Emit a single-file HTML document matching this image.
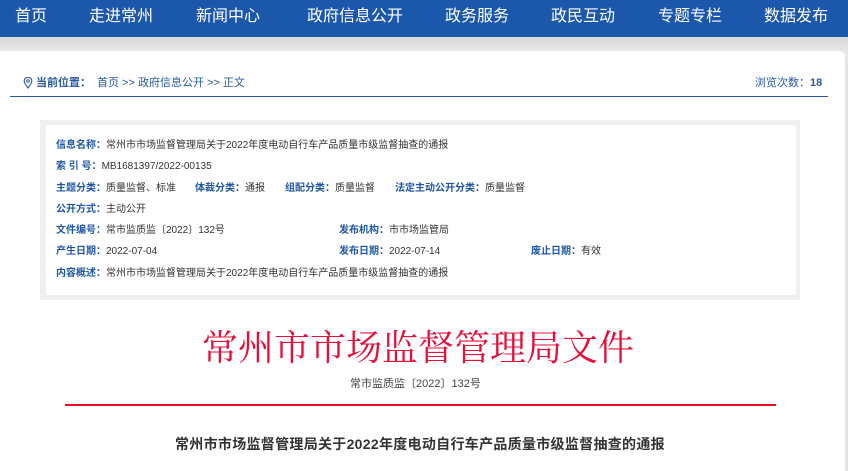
<!DOCTYPE html>
<html><head><meta charset="utf-8"><style>
*{margin:0;padding:0;box-sizing:border-box}
body{width:848px;height:456px;overflow:hidden;background:#e4e4e4;font-family:"Liberation Sans","Noto Sans CJK SC",sans-serif;position:relative}
.nav{position:absolute;left:0;top:0;width:848px;height:37px;background:#1b57aa;}
.nav span{position:absolute;top:7px;color:#fff;font-size:16px;line-height:20px;white-space:nowrap}
.bg{position:absolute;top:37px;left:0;width:848px;height:20px;background:linear-gradient(#d8d8d8,#ececec)}
.card{position:absolute;left:0;top:51px;width:845px;height:420px;background:#fff;border-top-right-radius:6px}
.abs{position:absolute;white-space:nowrap}
.bc{top:76px;font-size:11px;color:#2a5aa0;line-height:14px}
.line{position:absolute;left:10px;top:96px;width:818px;height:1px;background:#2a5aa0}
.box{position:absolute;left:40px;top:120px;width:760px;height:180px;background:#f0f0f0}
.inner{position:absolute;left:46px;top:125px;width:750px;height:170px;background:#fff}
.r{font-size:10px;line-height:12px;color:#333}
.r b{color:#1f56a6;font-weight:bold}
</style></head><body>
<div class="nav">
<span style="left:15px">首页</span>
<span style="left:89px">走进常州</span>
<span style="left:196px">新闻中心</span>
<span style="left:307px">政府信息公开</span>
<span style="left:445px">政务服务</span>
<span style="left:551px">政民互动</span>
<span style="left:658px">专题专栏</span>
<span style="left:764px">数据发布</span>
</div>
<div class="bg"></div>
<div class="card"></div>
<svg class="abs" style="left:23px;top:77px" width="10" height="12" viewBox="0 0 10 12"><path d="M5 11C2 7 1.2 5.5 1.2 4A3.8 3.8 0 0 1 8.8 4C8.8 5.5 8 7 5 11Z" fill="none" stroke="#2a5aa0" stroke-width="1.1"/><circle cx="5" cy="4" r="1.3" fill="none" stroke="#2a5aa0"/></svg>
<div class="abs bc" style="left:36px"><b>当前位置：</b></div>
<div class="abs bc" style="left:97px">首页 &gt;&gt; 政府信息公开 &gt;&gt; 正文</div>
<div class="abs bc" style="left:755px">浏览次数：<b>18</b></div>
<div class="line"></div>
<div class="box"></div><div class="inner"></div>
<div class="abs r" style="left:56px;top:140px"><b>信息名称：</b>常州市市场监督管理局关于2022年度电动自行车产品质量市级监督抽查的通报</div>
<div class="abs r" style="left:56px;top:161px"><b>索 引 号：</b>MB1681397/2022-00135</div>
<div class="abs r" style="left:56px;top:183px"><b>主题分类：</b>质量监督、标准</div>
<div class="abs r" style="left:195px;top:183px"><b>体裁分类：</b>通报</div>
<div class="abs r" style="left:285px;top:183px"><b>组配分类：</b>质量监督</div>
<div class="abs r" style="left:395px;top:183px"><b>法定主动公开分类：</b>质量监督</div>
<div class="abs r" style="left:56px;top:204px"><b>公开方式：</b>主动公开</div>
<div class="abs r" style="left:56px;top:225px"><b>文件编号：</b>常市监质监〔2022〕132号</div>
<div class="abs r" style="left:339px;top:225px"><b>发布机构：</b>市市场监管局</div>
<div class="abs r" style="left:56px;top:246px"><b>产生日期：</b>2022-07-04</div>
<div class="abs r" style="left:339px;top:246px"><b>发布日期：</b>2022-07-14</div>
<div class="abs r" style="left:531px;top:246px"><b>废止日期：</b>有效</div>
<div class="abs r" style="left:56px;top:268px"><b>内容概述：</b>常州市市场监督管理局关于2022年度电动自行车产品质量市级监督抽查的通报</div>
<div class="abs" style="left:202px;top:328px;font-family:'Liberation Serif','Noto Serif CJK SC',serif;font-size:36px;line-height:40px;color:#e5103a">常州市市场监督管理局文件</div>
<div class="abs" style="left:350px;top:377px;font-size:11px;line-height:14px;color:#444">常市监质监〔2022〕132号</div>
<div class="abs" style="left:65px;top:404px;width:711px;height:2px;background:#e8101a"></div>
<div class="abs" style="left:175px;top:435px;font-size:14px;line-height:18px;font-weight:bold;color:#333;letter-spacing:0.3px">常州市市场监督管理局关于2022年度电动自行车产品质量市级监督抽查的通报</div>
</body></html>
